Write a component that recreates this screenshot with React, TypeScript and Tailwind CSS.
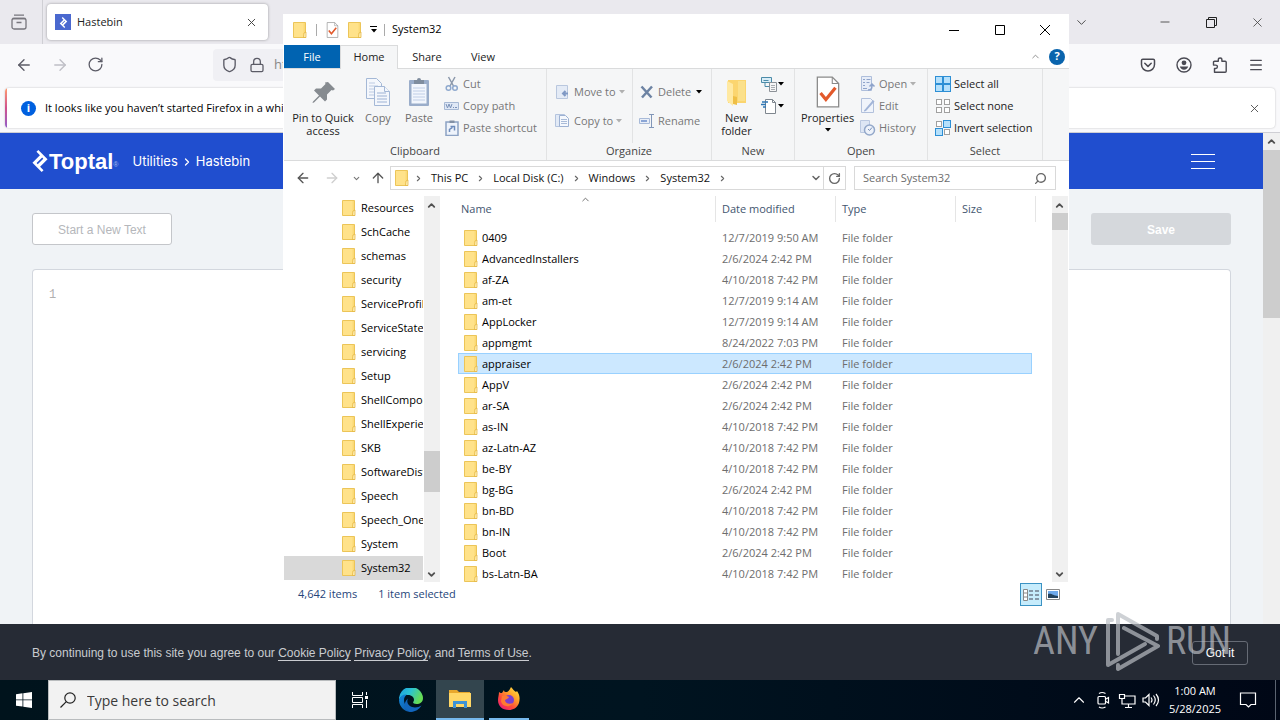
import { useState } from "react";
import type { ReactNode } from "react";
import { ArrowLeft, ArrowRight, ArrowUp, ChevronDown, ChevronRight, ChevronUp, Lock, Menu, Minus, RotateCw, Search, Shield, X } from "lucide-react";
import { SiToptal } from "react-icons/si";

const TREE = [
  "Resources", "SchCache", "schemas", "security", "ServiceProfiles", "ServiceState", "servicing", "Setup",
  "ShellComponents", "ShellExperiences", "SKB", "SoftwareDistribution", "Speech", "Speech_OneCore", "System", "System32",
];

const FILES: [string, string][] = [
  ["0409", "12/7/2019 9:50 AM"],
  ["AdvancedInstallers", "2/6/2024 2:42 PM"],
  ["af-ZA", "4/10/2018 7:42 PM"],
  ["am-et", "12/7/2019 9:14 AM"],
  ["AppLocker", "12/7/2019 9:14 AM"],
  ["appmgmt", "8/24/2022 7:03 PM"],
  ["appraiser", "2/6/2024 2:42 PM"],
  ["AppV", "2/6/2024 2:42 PM"],
  ["ar-SA", "2/6/2024 2:42 PM"],
  ["as-IN", "4/10/2018 7:42 PM"],
  ["az-Latn-AZ", "4/10/2018 7:42 PM"],
  ["be-BY", "4/10/2018 7:42 PM"],
  ["bg-BG", "2/6/2024 2:42 PM"],
  ["bn-BD", "4/10/2018 7:42 PM"],
  ["bn-IN", "4/10/2018 7:42 PM"],
  ["Boot", "2/6/2024 2:42 PM"],
  ["bs-Latn-BA", "4/10/2018 7:42 PM"],
];

const CRUMBS = ["This PC", "Local Disk (C:)", "Windows", "System32"];

function FolderIcon({ className = "w-[14px] h-4" }: { className?: string }) {
  return (
    <svg viewBox="0 0 14 16" className={`${className} shrink-0`}>
      <path d="M0.5 0.5h12v15h-12z" fill="#fbd976" stroke="#ecc558" />
      <path d="M1 1h9.500v14H1z" fill="#ffe28a" />
      <path d="M11 11l2-1v5.500h-2.500z" fill="#fff0b8" stroke="#e3b034" strokeWidth="0.700" />
    </svg>
  );
}

function Caret({ className = "text-black" }: { className?: string }) {
  return (
    <svg viewBox="0 0 6 4" className={`w-[6px] h-1 shrink-0 ${className}`}>
      <path d="M0 0h6L3 3.5z" fill="currentColor" />
    </svg>
  );
}

function CheckPage({ className }: { className: string }) {
  return (
    <svg viewBox="0 0 22 30" className={className}>
      <path d="M1 1h14l6 6v22H1z" fill="#fff" stroke="#8a8a8a" strokeWidth="1.2" />
      <path d="M15 1v6h6" fill="none" stroke="#8a8a8a" />
      <path d="M4 16l5 6 9-11" fill="none" stroke="#e2592b" strokeWidth="3" />
    </svg>
  );
}

function PinIcon() {
  return (
    <svg viewBox="0 0 32 32" className="h-8 w-8">
      <path d="M21 6l7 7-2 1.500-1.500-.5-4.500 4.500 0 5-2 2-5-5-6 6-1.500.5.500-1.500 6-6-5-5 2-2 5 0 4.500-4.500-.5-1.500z" fill="#868b90" />
    </svg>
  );
}

function CopyIcon() {
  return (
    <svg viewBox="0 0 32 32" className="h-8 w-8" fill="#f4f7fc" stroke="#a4b8d6">
      <path d="M4.500 2.500h10l5 5v15h-15z" />
      <path d="M7 7h6M7 10h9M7 13h9M7 16h9M7 19h9" stroke="#bccae2" />
      <path d="M12.500 10.500h10l5 5v14h-15z" />
      <path d="M22.500 10.500v5h5" />
      <path d="M15 17h9M15 20h10M15 23h10M15 26h10" stroke="#9db2d4" />
    </svg>
  );
}

function PasteIcon() {
  return (
    <svg viewBox="0 0 32 32" className="h-8 w-8">
      <rect x="6" y="4" width="20" height="26" rx="1" fill="#9aadca" />
      <path d="M8.500 8h15v19.500h-15z" fill="#f2f6fd" />
      <path d="M10 12h12M10 15h12M10 18h12M10 21h12M10 24h12" stroke="#c0cee6" />
      <path d="M11 4h3a2 2 0 014 0h3v4H11z" fill="#7f8d9f" />
    </svg>
  );
}

function BigFolder() {
  return (
    <svg viewBox="0 0 32 32" className="h-8 w-8">
      <path d="M7 4h18v23H7z" fill="#fbd56f" />
      <path d="M6 5l6 3v22l-6-5z" fill="#ffe9a2" />
      <path d="M17 5h7v20h-7z" fill="#fbe08a" />
      <path d="M12 28v-8l4 1v8z" fill="#efbf45" />
    </svg>
  );
}

function SmallIcon({ children }: { children: ReactNode }) {
  return <svg viewBox="0 0 16 16" className="h-4 w-4 shrink-0" fill="none">{children}</svg>;
}

const cutIcon = (
  <SmallIcon>
    <path d="M4.500 1l5 9M11 1l-5 9" stroke="#8b98ab" strokeWidth="1.500" />
    <circle cx="4.500" cy="12" r="2.300" stroke="#8fa9ce" strokeWidth="1.500" />
    <circle cx="11" cy="12" r="2.300" stroke="#8fa9ce" strokeWidth="1.500" />
  </SmallIcon>
);
const pathIcon = (
  <SmallIcon>
    <path d="M.5 4.500h14v7H.5z" fill="#dfe8f6" stroke="#a6b8d4" />
    <path d="M2 6l1.500 4L5 6l1.500 4L8 6M9 9.500h1M11 9.500h2" stroke="#7a91b8" />
  </SmallIcon>
);
const shortcutIcon = (
  <SmallIcon>
    <path d="M2 2h12v13.500H2z" fill="#eef3fb" stroke="#8ca2c4" strokeWidth="1.500" />
    <path d="M5.500.5h5v2.500h-5z" fill="#8290a4" />
    <path d="M5.500 12V9.500l3-2M6.500 6.500h4v4" stroke="#6d8bbb" strokeWidth="1.500" />
  </SmallIcon>
);
const moveIcon = (
  <SmallIcon>
    <path d="M1.500 1.500h11v13h-11z" fill="#e4ebf6" stroke="#b9c7de" />
    <path d="M13 9.500H8M10.500 7L8 9.500l2.500 2.500" stroke="#8099c4" strokeWidth="2" />
  </SmallIcon>
);
const copyToIcon = (
  <SmallIcon>
    <path d="M.5 1.500h9v12h-9z" fill="#e2eaf6" stroke="#b4c4de" />
    <path d="M4.500 2.500h6l3 3v8h-9z" fill="#f5f8fd" stroke="#9db1d2" />
    <path d="M6 6.500h6M6 8.500h6M6 10.500h6" stroke="#a9bbd8" />
  </SmallIcon>
);
const deleteIcon = <SmallIcon><path d="M2.500 2.500l10 11M13 2.500l-10 11" stroke="#6d83a3" strokeWidth="2.500" /></SmallIcon>;
const renameIcon = (
  <SmallIcon>
    <path d="M.5 5.500h10v5H.5z" fill="#e8eef8" stroke="#a8bad8" />
    <path d="M2 7h6v2H2z" fill="#8ba6d6" />
    <path d="M12.500 2v12M10 1.500h5M10 14.500h5" stroke="#8196b8" />
  </SmallIcon>
);
const newItemIcon = (
  <SmallIcon>
    <path d="M.5 1.500h10v5H.5z" fill="#d9edf7" stroke="#4b8ba8" />
    <path d="M2.500 4.500h5M4 6.500v4h4" stroke="#4b8ba8" />
    <path d="M8.500 6.500h7v9h-7z" fill="#f6f6f6" stroke="#8d9298" />
    <path d="M10 9.500h4M10 11.500h4M10 13.500h4" stroke="#a9adb2" />
  </SmallIcon>
);
const easyAccessIcon = (
  <SmallIcon>
    <path d="M4.500 1.500h7l3 3v11h-10z" fill="#fff" stroke="#7e868e" />
    <path d="M11.500 1.500v3h3" stroke="#7e868e" />
    <path d="M1 4h6M0 6.500h5M2 9h3" stroke="#2f77b5" strokeWidth="1.300" />
  </SmallIcon>
);
const openIcon = (
  <SmallIcon>
    <path d="M1.500.5h10v14h-10z" fill="#e7edf8" stroke="#aebedb" />
    <path d="M3 3.500h2M6.500 3.500h4M3 6.500h2M6.500 6.500h3M3 9.500h2M3 12.500h4" stroke="#8fa4cb" />
    <path d="M8 14c4 0 4-2 4-5M9.500 10.500L12 8l2.500 2.500" stroke="#8fa4cb" strokeWidth="1.500" />
  </SmallIcon>
);
const editIcon = (
  <SmallIcon>
    <path d="M1.500.5h9l3 3v11h-12z" fill="#f0f4fb" stroke="#b2c1dc" />
    <path d="M4 12.500L13 2l1.500 1.500L6 13l-2 .500z" fill="#a2b5d8" />
  </SmallIcon>
);
const historyIcon = (
  <SmallIcon>
    <path d="M.5.5h9v12h-9z" fill="#dde6f4" stroke="#bac8e0" />
    <circle cx="9.500" cy="10" r="5" fill="#edf2fa" stroke="#93a8ca" strokeWidth="1.500" />
    <path d="M12 7.500l-2.500 3L8 9" stroke="#7990b8" />
  </SmallIcon>
);

// quadrants listed in "on" are filled blue, the others stay hollow
function QuadIcon({ on }: { on: number[] }) {
  return (
    <SmallIcon>
      {[0, 1, 2, 3].map((i) => (
        <rect
          key={i}
          x={(i % 2) * 8 + (on.includes(i) ? 0.5 : 1.5)}
          y={Math.floor(i / 2) * 8 + (on.includes(i) ? 0.5 : 1.5)}
          width={on.includes(i) ? 7 : 5}
          height={on.includes(i) ? 7 : 5}
          fill={on.includes(i) ? "#b5e0fb" : "#fff"}
          stroke={on.includes(i) ? "#2d8fd5" : "#a0a0a0"}
        />
      ))}
    </SmallIcon>
  );
}

type SmallButtonProps = { icon: ReactNode; label: string; active?: boolean; caret?: boolean };

function SmallButton({ icon, label, active = false, caret = false }: SmallButtonProps) {
  return (
    <button className={`flex h-[22px] items-center gap-[3px] whitespace-nowrap ${active ? "text-[#222]" : "text-[#777]"}`}>
      {icon}
      <span>{label}</span>
      {caret && <Caret className={label === "Delete" ? "ml-[2px] text-black" : "text-[#b0b0b0]"} />}
    </button>
  );
}

function LargeButton({ icon, lines, width, muted = false, caret = false }: { icon: ReactNode; lines: string[]; width: string; muted?: boolean; caret?: boolean }) {
  return (
    <button className={`flex flex-col items-center gap-[3px] pt-[7px] leading-[13px] ${width} ${muted ? "text-[#6d6d6d]" : "text-[#222]"}`}>
      {icon}
      <span className="flex flex-col items-center whitespace-nowrap">
        {lines.map((line) => <span key={line}>{line}</span>)}
        {caret && <Caret className="mt-1 text-black" />}
      </span>
    </button>
  );
}

function RibbonGroup({ label, width, children }: { label: string; width: string; children: ReactNode }) {
  return (
    <section className={`flex shrink-0 flex-col border-r border-[#e2e3e4] ${width}`}>
      <div className="flex flex-1">{children}</div>
      <h2 className="pb-px text-center leading-4 text-[#444]">{label}</h2>
    </section>
  );
}

function ScrollBar({ thumb }: { thumb: string }) {
  return (
    <div className="relative flex w-4 shrink-0 flex-col justify-between bg-[#f0f0f0] pr-px">
      <button aria-label="Scroll up" className="flex h-[18px] items-center justify-center"><ChevronUp size={11} strokeWidth={4} color="#505050" /></button>
      <div className={`absolute inset-x-0 bg-[#cdcdcd] ${thumb}`} />
      <button aria-label="Scroll down" className="flex h-4 items-center justify-center"><ChevronDown size={11} strokeWidth={4} color="#505050" /></button>
    </div>
  );
}

function Ribbon() {
  return (
    <div className="flex h-[93px] shrink-0 overflow-hidden border-y border-[#dadbdc] bg-[#f5f6f7]">
      <RibbonGroup label="Clipboard" width="w-[263px]">
        <LargeButton icon={<PinIcon />} lines={["Pin to Quick", "access"]} width="w-[78px]" />
        <LargeButton icon={<CopyIcon />} lines={["Copy"]} width="w-[32px]" muted />
        <LargeButton icon={<PasteIcon />} lines={["Paste"]} width="w-[50px]" muted />
        <div className="flex flex-col pt-1">
          <SmallButton icon={cutIcon} label="Cut" />
          <SmallButton icon={pathIcon} label="Copy path" />
          <SmallButton icon={shortcutIcon} label="Paste shortcut" />
        </div>
      </RibbonGroup>
      <RibbonGroup label="Organize" width="w-[165px]">
        <div className="flex w-[86px] flex-col gap-[7px] border-r border-[#e2e3e4] pt-3 pl-2">
          <SmallButton icon={moveIcon} label="Move to" caret />
          <SmallButton icon={copyToIcon} label="Copy to" caret />
        </div>
        <div className="flex flex-col gap-[7px] pt-3 pl-[6px]">
          <SmallButton icon={deleteIcon} label="Delete" caret />
          <SmallButton icon={renameIcon} label="Rename" />
        </div>
      </RibbonGroup>
      <RibbonGroup label="New" width="w-[83px]">
        <LargeButton icon={<BigFolder />} lines={["New", "folder"]} width="w-[49px]" />
        <div className="flex flex-col pt-1">
          <button aria-label="New item" className="flex h-[22px] items-center gap-[1px]">{newItemIcon}<Caret /></button>
          <button aria-label="Easy access" className="flex h-[22px] items-center gap-[1px]">{easyAccessIcon}<Caret /></button>
        </div>
      </RibbonGroup>
      <RibbonGroup label="Open" width="w-[133px]">
        <LargeButton icon={<CheckPage className="h-8 w-6" />} lines={["Properties"]} width="w-[65px]" caret />
        <div className="flex flex-col pt-1">
          <SmallButton icon={openIcon} label="Open" caret />
          <SmallButton icon={editIcon} label="Edit" />
          <SmallButton icon={historyIcon} label="History" />
        </div>
      </RibbonGroup>
      <RibbonGroup label="Select" width="w-[115px]">
        <div className="flex flex-col pt-1 pl-[7px]">
          <SmallButton icon={<QuadIcon on={[0, 1, 2, 3]} />} label="Select all" active />
          <SmallButton icon={<QuadIcon on={[]} />} label="Select none" active />
          <SmallButton icon={<QuadIcon on={[1, 2]} />} label="Invert selection" active />
        </div>
      </RibbonGroup>
    </div>
  );
}

function AddressRow() {
  return (
    <div className="flex h-[34px] shrink-0 items-center pr-[13px] pl-[11px]">
      <button aria-label="Back" className="w-[29px]"><ArrowLeft size={16} color="#555" /></button>
      <button aria-label="Forward" className="w-7"><ArrowRight size={16} color="#cfcfcf" /></button>
      <button aria-label="Recent locations" className="w-[18px]"><ChevronDown size={9} strokeWidth={3} color="#777" /></button>
      <button aria-label="Up" className="w-5"><ArrowUp size={16} color="#555" /></button>
      <nav className="flex h-6 flex-1 items-center border border-[#d9d9d9] pl-1">
        <FolderIcon />
        {CRUMBS.map((crumb) => (
          <span key={crumb} className="flex items-center">
            <ChevronRight size={9} strokeWidth={3} color="#666" className="mx-[5px]" />
            <a href="#" className="px-[3px] whitespace-nowrap text-[#111]">{crumb}</a>
          </span>
        ))}
        <ChevronRight size={9} strokeWidth={3} color="#666" className="mx-[5px]" />
        <button aria-label="Previous locations" className="ml-auto px-[1px]"><ChevronDown size={12} strokeWidth={3} color="#666" /></button>
        <button aria-label="Refresh" className="flex h-full items-center border-l border-[#d9d9d9] px-1"><RotateCw size={13} strokeWidth={2.500} color="#666" /></button>
      </nav>
      <label className="ml-2 flex h-6 w-[202px] items-center border border-[#d9d9d9] px-2">
        <input aria-label="Search System32" placeholder="Search System32" className="min-w-0 flex-1 outline-none placeholder:text-[#6d6d6d]" />
        <Search size={13} strokeWidth={2.500} color="#666" className="-scale-x-100" />
      </label>
    </div>
  );
}

function FileTable({ selected, onSelect }: { selected: string; onSelect: (name: string) => void }) {
  return (
    <table className="w-[578px] table-fixed border-separate border-spacing-0 text-left whitespace-nowrap text-[#6d6d6d]">
      <colgroup>
        <col className="w-[258px]" />
        <col className="w-[120px]" />
        <col className="w-[120px]" />
        <col className="w-[76px]" />
        <col className="w-1" />
      </colgroup>
      <thead className="text-[#43566f]">
        <tr className="h-[26px]">
          <th className="relative border-r border-[#e5e5e5] pl-[3px] font-normal">
            Name
            <ChevronUp size={11} color="#666" className="absolute top-[-2px] left-[122px]" />
          </th>
          <th className="border-r border-[#e5e5e5] pl-[6px] font-normal">Date modified</th>
          <th className="border-r border-[#e5e5e5] pl-[6px] font-normal">Type</th>
          <th colSpan={2} className="border-r border-[#e5e5e5] pl-[6px] font-normal">Size</th>
        </tr>
        <tr aria-hidden="true"><td colSpan={5} className="h-[5px]" /></tr>
      </thead>
      <tbody>
        {FILES.map(([name, date]) => {
          const on = name === selected;
          const cell = on ? "h-[21px] py-0 bg-[#cce8ff] border-y border-[#99d1ff]" : "h-[21px] py-0";
          return (
            <tr key={name} aria-selected={on} onClick={() => onSelect(name)}>
              <td className={`${cell} text-black ${on ? "border-l pl-[5px]" : "pl-[6px]"}`}>
                <span className="flex items-center gap-1 leading-4"><FolderIcon />{name}</span>
              </td>
              <td className={`${cell} pl-[6px] leading-4`}>{date}</td>
              <td className={`${cell} pl-[6px] leading-4`}>File folder</td>
              <td className={`${cell} ${on ? "border-r" : ""}`} />
            </tr>
          );
        })}
      </tbody>
    </table>
  );
}

function ExplorerWindow() {
  const [selected, setSelected] = useState("appraiser");

  return (
    <main className="absolute top-[14px] left-[283px] flex h-[593px] w-[786px] flex-col bg-white pl-px font-['Open_Sans','Noto_Sans',sans-serif] text-[11px] text-[#222]">
      <header className="flex h-[31px] shrink-0 items-center pr-px pl-[9px]">
        <FolderIcon />
        <span className="mx-[9px] h-3 w-px bg-[#aaa]" />
        <CheckPage className="h-4 w-[13px]" />
        <FolderIcon className="ml-[9px] h-4 w-[14px]" />
        <span className="ml-2 flex flex-col items-center gap-[2px]"><span className="h-px w-[7px] bg-black" /><Caret /></span>
        <span className="mx-[7px] h-3 w-px bg-[#aaa]" />
        <h1 className="text-black">System32</h1>
        <div className="ml-auto flex">
          <button aria-label="Minimize" className="flex w-[46px] justify-center"><svg viewBox="0 0 10 10" className="size-[10px]"><path d="M0 5.500h10" stroke="#000" /></svg></button>
          <button aria-label="Maximize" className="flex w-[45px] justify-center"><svg viewBox="0 0 10 10" className="size-[10px]"><path d="M.5.5h9v9h-9z" fill="none" stroke="#000" /></svg></button>
          <button aria-label="Close" className="flex w-[46px] justify-center"><svg viewBox="0 0 10 10" className="size-[10px]"><path d="M0 0l10 10M10 0L0 10" stroke="#000" /></svg></button>
        </div>
      </header>
      <div className="flex h-[23px] shrink-0 items-stretch">
        <button className="w-14 bg-[#0063b1] pt-px text-white">File</button>
        <button className="relative z-10 -mb-px w-[58px] border border-b-0 border-[#dadbdc] bg-[#f5f6f7]">Home</button>
        <button className="w-[58px] pt-px">Share</button>
        <button className="w-[54px] pt-px">View</button>
        <div className="ml-auto flex items-center gap-2 pr-1">
          <ChevronUp size={11} color="#888" />
          <button className="flex size-4 items-center justify-center rounded-full bg-[#0a64ad] font-bold text-white">?</button>
        </div>
      </div>
      <Ribbon />
      <AddressRow />
      <div className="flex min-h-0 flex-1 pt-px">
        <ul className="w-[139px] shrink-0 overflow-hidden">
          {TREE.map((name) => (
            <li key={name} className={`flex h-6 items-center gap-[5px] pl-[58px] whitespace-nowrap text-black ${name === "System32" ? "bg-[#d9d9d9]" : ""}`}>
              <FolderIcon />
              {name}
            </li>
          ))}
        </ul>
        <div className="w-px" />
        <ScrollBar thumb="top-[255px] h-[41px]" />
        <div className="min-w-0 flex-1 overflow-hidden pl-[18px]">
          <FileTable selected={selected} onSelect={setSelected} />
        </div>
        <ScrollBar thumb="top-[17px] h-[17px]" />
        <div className="w-px" />
      </div>
      <footer className="flex h-[25px] shrink-0 items-center gap-[21px] pr-[9px] pl-[14px] text-[#26457a]">
        <span>4,642 items</span>
        <span>1 item selected</span>
        <div className="ml-auto flex items-center gap-1">
          <button aria-label="Details view" className="flex h-[23px] w-[22px] items-center justify-center border border-[#3b93c4] bg-[#c6ecfc]">
            <svg viewBox="0 0 18 14" className="h-[14px] w-[18px]" fill="none">
              <path d="M1.500 1.500h4v11h-4zM1.500 5h4M1.500 9h4" fill="#fff" stroke="#888" />
              <path d="M7 3h4M13 3h4M7 7h4M13 7h4M7 11h4M13 11h4" stroke="#445" />
            </svg>
          </button>
          <button aria-label="Large icons view">
            <svg viewBox="0 0 14 12" className="h-3 w-[14px]">
              <path d="M.5.5h13v10H.5z" fill="#fff" stroke="#888" />
              <path d="M2 2h10v7H2z" fill="#6fa9ea" />
              <path d="M2 5c4-1 5 2 10 2v2H2z" fill="#24425c" />
            </svg>
          </button>
        </div>
      </footer>
    </main>
  );
}

function FirefoxChrome() {
  return (
    <div className="shrink-0 font-['Open_Sans','Noto_Sans',sans-serif] text-[11px] text-[#222]">
      <div className="flex h-11 items-center bg-[#eae9ee]">
        <button aria-label="Firefox View" className="flex h-full w-[43px] items-center justify-center border-r border-[#cfcfd4] pr-1">
          <svg viewBox="0 0 16 16" className="size-4" fill="none" stroke="#77767d" strokeWidth="1.300">
            <path d="M3 1.200h10M1.500 4.500h13M5.500 8.500h5" />
            <rect x="1" y="4.500" width="14" height="10.500" rx="2" />
          </svg>
        </button>
        <div className="ml-1 flex h-9 w-[221px] items-center rounded bg-white px-2 shadow-[0_0_3px_rgba(0,0,0,0.35)]">
          <span className="flex size-4 items-center justify-center bg-[#4a68cf] text-white"><SiToptal size={11} /></span>
          <span className="ml-[6px]">Hastebin</span>
          <button aria-label="Close tab" className="ml-auto pr-[2px]"><X size={13} strokeWidth={1.800} color="#444" /></button>
        </div>
        <div className="ml-auto flex items-center text-[#444]">
          <button aria-label="List tabs" className="mr-[53px]"><ChevronDown size={15} strokeWidth={1.500} /></button>
          <button aria-label="Minimize Firefox" className="flex w-[46px] justify-center"><Minus size={14} strokeWidth={1.500} /></button>
          <button aria-label="Restore Firefox" className="flex w-[46px] justify-center">
            <svg viewBox="0 0 11 11" className="size-[11px]" fill="none" stroke="#222"><path d="M.5 2.500h8v8h-8zM2.500 2.500v-2h8v8h-2" /></svg>
          </button>
          <button aria-label="Close Firefox" className="flex w-[46px] justify-center"><X size={15} strokeWidth={1.300} /></button>
        </div>
      </div>
      <div className="flex h-[44px] items-center bg-[#f9f9fb] pb-[3px] text-[#5b5b66]">
        <button aria-label="Page back" className="ml-[15px] w-9"><ArrowLeft size={18} strokeWidth={1.800} /></button>
        <button aria-label="Page forward" className="w-9 text-[#bfbfc6]"><ArrowRight size={18} strokeWidth={1.800} /></button>
        <button aria-label="Reload" className="w-9"><RotateCw size={17} strokeWidth={1.800} /></button>
        <div className="ml-[90px] flex h-8 flex-1 items-center rounded bg-[#f0f0f4] pl-2">
          <Shield size={17} strokeWidth={1.900} />
          <Lock size={16} strokeWidth={1.900} className="mr-[9px] ml-[11px]" />
          <span className="text-[13px] text-[#888]">https://hastebin.com</span>
        </div>
        <div className="mr-4 ml-[200px] flex items-center gap-5 text-[#4a4a53]">
          <button aria-label="Save to Pocket">
            <svg viewBox="0 0 16 16" className="size-4" fill="none" stroke="currentColor" strokeWidth="1.500" strokeLinecap="round" strokeLinejoin="round">
              <path d="M2.800 2.200h10.400c.8 0 1.300.5 1.300 1.300v4a6.500 6.500 0 01-13 0v-4c0-.8.5-1.300 1.300-1.300z" /><path d="M4.800 6.300L8 9.400l3.200-3.100" />
            </svg>
          </button>
          <button aria-label="Account">
            <svg viewBox="0 0 16 16" className="size-4"><circle cx="8" cy="8" r="7" fill="none" stroke="currentColor" strokeWidth="1.400" /><circle cx="8" cy="5.800" r="2.400" fill="currentColor" /><path d="M3.800 9.500h8.400c-.5 2-2.200 3.200-4.200 3.200s-3.700-1.200-4.200-3.200z" fill="currentColor" /></svg>
          </button>
          <button aria-label="Extensions">
            <svg viewBox="0 0 16 16" className="size-4" fill="none" stroke="currentColor" strokeWidth="1.400" strokeLinejoin="round">
              <path d="M2.500 15.200V11.500h1.200a1.700 1.700 0 000-3.400H1.500V5.300c0-.6.4-1 1-1h3.800V2.800a1.800 1.800 0 013.600 0v1.500h3.300c.6 0 1 .4 1 1v9c0 .5-.4.9-1 .9z" />
            </svg>
          </button>
          <button aria-label="Application menu"><Menu size={16} strokeWidth={1.900} /></button>
        </div>
      </div>
      <div className="h-[45px] border-b border-[#cfcfd4] bg-[#f9f9fb] pr-[5px] pl-[5px]">
        <div className="flex h-10 items-center overflow-hidden rounded bg-white pr-[14px] shadow-[0_0_2px_rgba(0,0,0,0.25)]">
          <span className="h-full w-[2px] bg-linear-to-b from-[#ff9a6c] via-[#d0508c] to-[#9059c8]" />
          <span className="ml-[14px] flex size-[15px] items-center justify-center rounded-full bg-[#0060df] font-bold text-white">i</span>
          <p className="ml-[9px] text-black">It looks like you haven’t started Firefox in a while.</p>
          <button aria-label="Dismiss message" className="ml-auto"><X size={13} strokeWidth={1.600} color="#444" /></button>
        </div>
      </div>
    </div>
  );
}

function HastebinPage() {
  return (
    <div className="flex min-h-0 flex-1 font-['Liberation_Sans',sans-serif]">
      <div className="flex min-w-0 flex-1 flex-col bg-[#f0f3f6]">
        <header className="flex h-14 shrink-0 items-center bg-[#204ecf] pr-12 pl-[29px] text-white">
          <a href="#" className="flex items-center" aria-label="Toptal home">
            <SiToptal size={22} className="-mr-[2px]" />
            <span className="text-[22px] font-bold">Toptal</span>
            <span className="mt-2 text-[7px] text-[#a8b9ee]">®</span>
          </a>
          <nav className="ml-[14px] flex items-center gap-[3px] pt-px font-['Inter',sans-serif] text-[13px]">
            <a href="#">Utilities</a>
            <ChevronRight size={12} strokeWidth={2.500} />
            <a href="#">Hastebin</a>
          </nav>
          <button aria-label="Menu" className="ml-auto flex w-6 flex-col gap-[6px]">
            <span className="h-px bg-white" />
            <span className="h-px bg-white" />
            <span className="h-px bg-white" />
          </button>
        </header>
        <div className="flex min-h-0 flex-1 flex-col px-8 pt-6">
          <div className="flex justify-between">
            <button className="h-8 w-[140px] rounded-[3px] border border-[#c4c6ca] bg-white pt-px text-[12px] text-[#b5b7bb]">Start a New Text</button>
            <button className="h-8 w-[140px] rounded-[3px] bg-[#d5d8dc] pt-px text-[12px] font-bold text-white">Save</button>
          </div>
          <div className="mt-6 flex min-h-0 flex-1 rounded-t-[4px] border border-b-0 border-[#d3d7de] bg-white">
            <span className="w-10 pt-4 pl-4 font-['Liberation_Mono',monospace] text-[12px] text-[#b0b0b0]">1</span>
            <textarea aria-label="Document text" className="flex-1 resize-none outline-none" />
          </div>
        </div>
      </div>
      <div className="relative w-[17px] shrink-0 bg-[#f0f0f0]">
        <button aria-label="Page scroll up" className="flex h-[17px] w-full items-center justify-center"><ChevronUp size={11} strokeWidth={4} color="#505050" /></button>
        <div className="absolute inset-x-0 top-[17px] h-[168px] bg-[#cdcdcd]" />
      </div>
    </div>
  );
}

function CookieBar() {
  return (
    <div className="flex h-14 shrink-0 items-center justify-between bg-[#262b35] px-8 pt-px font-['Liberation_Sans',sans-serif] text-[12px] text-[#c9cbd0]">
      <p>
        By continuing to use this site you agree to our <a href="#" className="border-b">Cookie Policy</a>{" "}
        <a href="#" className="border-b">Privacy Policy</a>, and <a href="#" className="border-b">Terms of Use</a>.
      </p>
      <button className="h-6 w-14 rounded-[3px] border border-[#666b75] text-white">Got it</button>
    </div>
  );
}

function Watermark() {
  return (
    <div className="pointer-events-none absolute right-[49px] bottom-12 flex h-[62px] items-center gap-[6px] font-['Roboto_Condensed','Liberation_Sans_Narrow','DejaVu_Sans_Condensed',sans-serif] text-[38px] text-[#b9bdc3]/70">
      <span>ANY</span>
      <svg viewBox="0 0 56 62" className="h-[62px] w-14" fill="none" stroke="currentColor" strokeWidth="4" strokeLinejoin="round" strokeLinecap="round">
        <path d="M14 44V4l39 22v3" />
        <path d="M20 18l34 18-40 23v-4" />
        <path d="M8 10H4v45l37-21" />
      </svg>
      <span>RUN</span>
    </div>
  );
}

function Taskbar() {
  return (
    <footer className="flex h-10 shrink-0 bg-linear-to-r from-[#00131c] via-[#001420] to-[#000716] font-['Open_Sans','Noto_Sans',sans-serif] text-white">
      <button aria-label="Start" className="flex w-12 items-center justify-center">
        <svg viewBox="0 0 16 16" className="size-4" fill="#fff"><path d="M0 2.200l6.500-.9v6.200H0zM7.300 1.200L16 0v7.500H7.300zM0 8.300h6.500v6.300L0 13.700zM7.300 8.300H16V16l-8.700-1.200z" /></svg>
      </button>
      <label className="flex w-72 items-center gap-[11px] border border-[#b9bcbe] bg-[#f2f2f2] px-[11px] text-[#333]">
        <svg viewBox="0 0 16 16" className="size-4 shrink-0" fill="none" stroke="#222" strokeWidth="1.200"><circle cx="10" cy="6" r="5.200" /><path d="M6.300 9.700L.5 15.500" /></svg>
        <input aria-label="Type here to search" placeholder="Type here to search" className="min-w-0 flex-1 text-[14px] outline-none placeholder:text-[#3a3a3a]" />
      </label>
      <button aria-label="Task view" className="flex w-12 items-center justify-center">
        <svg viewBox="0 0 18 16" className="h-4 w-[18px]" fill="none" stroke="#fff"><path d="M1.500 0v3.500h10V0M1.500 5.500h10v5h-10zM1.500 16v-3.500h10V16M15.500 0v3M15.500 8v8" /><path d="M14 4h3v3h-3z" fill="#fff" stroke="none" /></svg>
      </button>
      <button aria-label="Microsoft Edge" className="flex w-[52px] items-center justify-center pl-[2px]">
        <svg viewBox="0 0 24 24" className="size-6">
          <defs>
            <linearGradient id="edgeTop" x1="0" y1="0" x2="1" y2="0.400"><stop offset="0" stopColor="#1b9de2" /><stop offset="0.500" stopColor="#2bc3d2" /><stop offset="1" stopColor="#66dd55" /></linearGradient>
            <linearGradient id="edgeLow" x1="0" y1="0" x2="1" y2="1"><stop offset="0" stopColor="#1389dc" /><stop offset="1" stopColor="#0c4fa0" /></linearGradient>
          </defs>
          <path d="M0 12A12 12 0 0124 10c0 4-3 6-6.500 6-3 0-4-1-3-2.500C16 11 14 7 9 7c-5 0-8 2-9 5z" fill="url(#edgeTop)" />
          <path d="M0 12c1-4 4-6 8-5.500-3 2-3.500 5-2.500 8.500 1.500 4.500 5 7 9.500 8.500A12 12 0 010 12z" fill="url(#edgeLow)" />
          <path d="M9 10.500c-2.500 5 2 9 7 9 2.500 0 4.500-1 6.500-2-3 5-8 7-12 6-5-2-7-8-1.500-13z" fill="#1266bd" />
        </svg>
      </button>
      <button aria-label="File Explorer" className="flex w-12 items-center justify-center border-b-2 border-[#76b9ed] bg-[#33454e]">
        <svg viewBox="0 0 22 20" className="h-5 w-[22px]">
          <path d="M0 1h8l2 2h11v3H0z" fill="#e8a82c" />
          <path d="M0 4h22v14H0z" fill="#ffd766" />
          <path d="M4 12h14v7h-3v-4H7v4H4z" fill="#3e93d6" />
        </svg>
      </button>
      <button aria-label="Firefox" className="ml-[5px] flex w-10 items-center justify-center border-b-2 border-[#76b9ed]">
        <svg viewBox="0 0 24 24" className="size-6">
          <defs><linearGradient id="fox" x1="1" y1="0" x2="0.200" y2="1"><stop offset="0" stopColor="#fff04a" /><stop offset="0.400" stopColor="#ffa22a" /><stop offset="0.700" stopColor="#ff4a3a" /><stop offset="1" stopColor="#ec1f75" /></linearGradient></defs>
          <path d="M2 5c1 1 2 1 3 1l2-3c0 2 1 2 3 2 2-1 3-3 4-5 2 2 3 4 5 5l1-1c3 4 3 8 2 12-2 5-6 7-10 7C5 23 1 19 1 13 1 10 2 8 2 5z" fill="url(#fox)" />
          <circle cx="12" cy="13" r="5" fill="#7b3fd0" />
          <path d="M5 9c3-2 5 0 7 1 0 1-2 2-4 3 0 3 4 5 8 3-3 5-11 4-12-2z" fill="#ff7a32" />
        </svg>
      </button>
      <div className="ml-auto flex items-center">
        <div className="flex items-center gap-[6px]">
          <ChevronUp size={18} strokeWidth={1.500} />
          <svg viewBox="0 0 18 18" className="size-[18px]" fill="none" stroke="#fff" strokeWidth="1.200"><rect x="4" y="5.500" width="7.500" height="7.500" rx="1" /><path d="M12 8l2.500-1.500v5.500L12 10.500M5 2.500q3-2 6.500 0M5 16q3 2 6.500 0" /></svg>
          <svg viewBox="0 0 18 18" className="size-[18px]" fill="none" stroke="#fff" strokeWidth="1.200"><path d="M7 5h10v8H4V9M10.500 13v3M7 16.500h7M1.500 3.500h5v4h-5zM4 7.500V10" /></svg>
          <svg viewBox="0 0 18 18" className="size-[18px]" fill="none" stroke="#fff" strokeWidth="1.200"><path d="M1 7h2.500L7 3.500v11L3.500 11H1zM9 6.500q2 2.500 0 5M11.500 4.500q3.500 4.500 0 9M14 3q5 6 0 12" /></svg>
        </div>
        <time className="w-[70px] text-center text-[11px] leading-[18px]">1:00 AM<br />5/28/2025</time>
        <button aria-label="Notifications" className="flex w-9 justify-center"><svg viewBox="0 0 18 18" className="size-[18px]" fill="none" stroke="#fff" strokeWidth="1.200"><path d="M1.500 2h15v11.500H12L9.500 16 7 13.500H1.500z" /></svg></button>
        <div className="mr-1 ml-[9px] h-10 w-px bg-[#5a6370]" />
      </div>
    </footer>
  );
}

export default function App() {
  return (
    <div className="relative flex h-screen w-full flex-col overflow-hidden bg-white">
      <FirefoxChrome />
      <HastebinPage />
      <CookieBar />
      <Taskbar />
      <ExplorerWindow />
      <Watermark />
    </div>
  );
}
